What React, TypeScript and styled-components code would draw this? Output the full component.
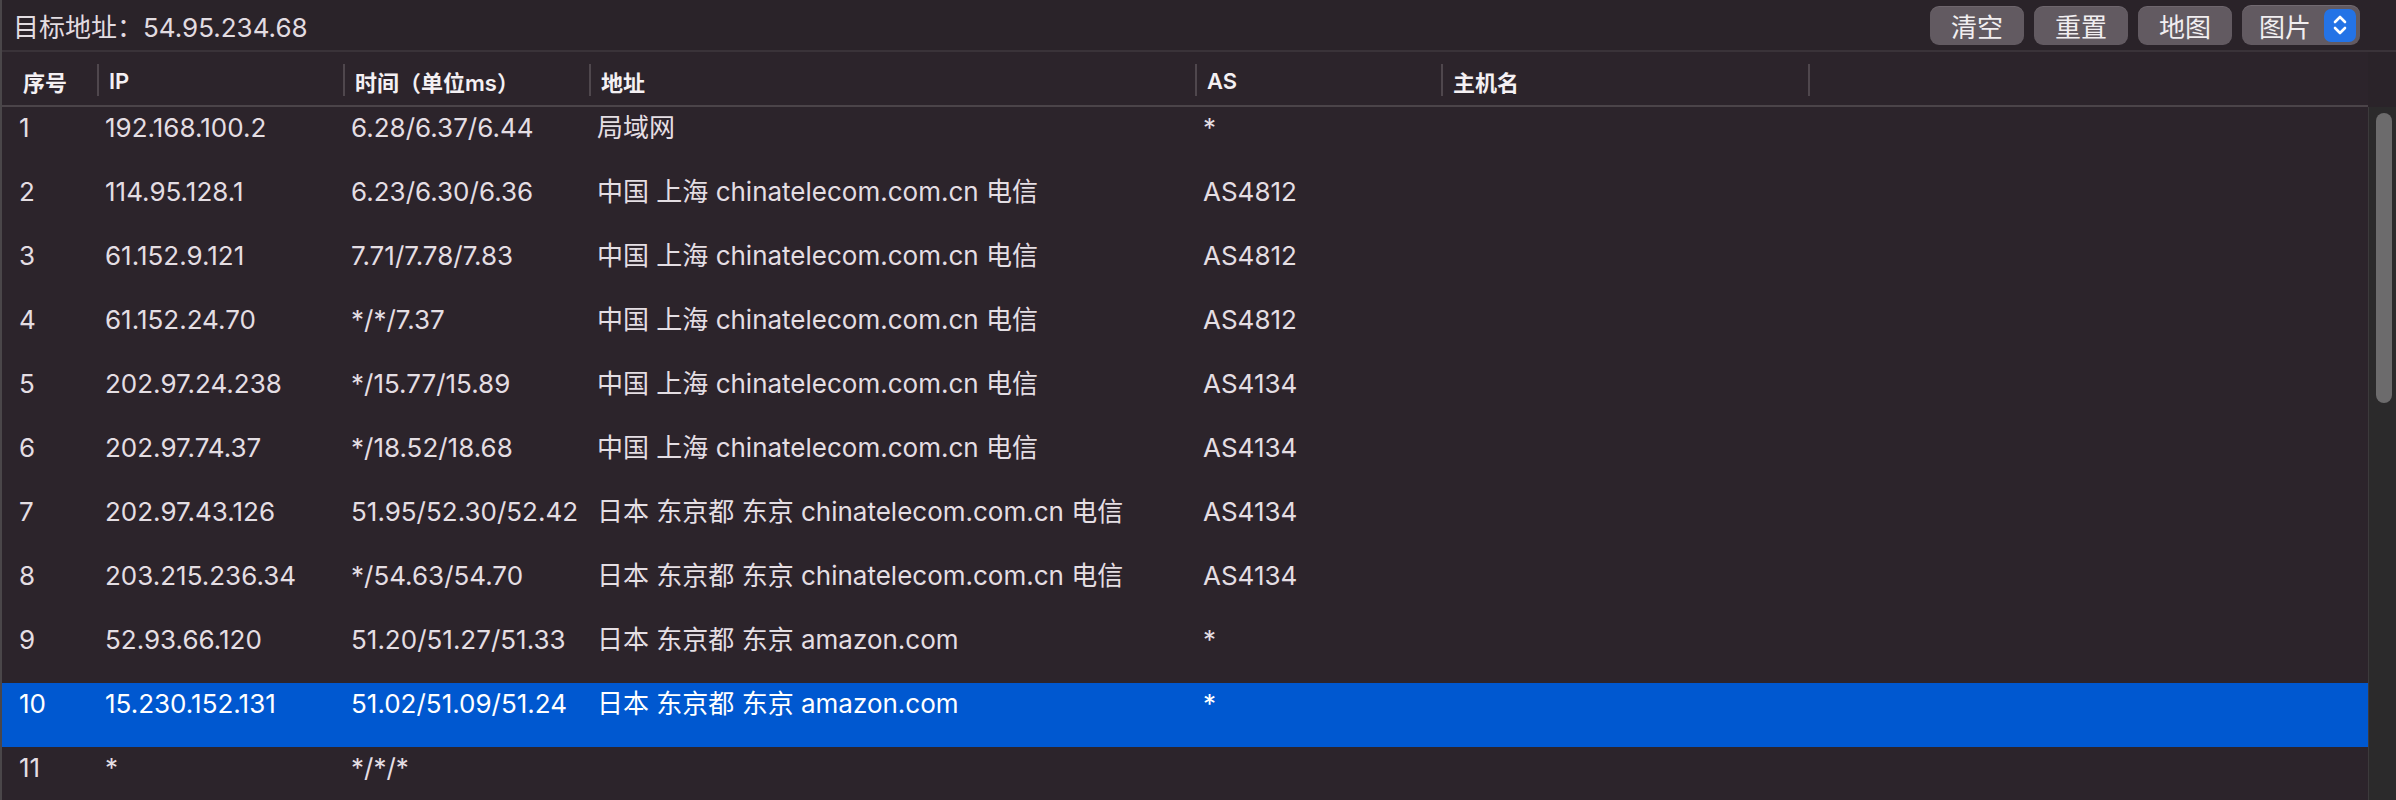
import React from 'react';
import styled, { createGlobalStyle } from 'styled-components';

const GlobalStyle = createGlobalStyle`
  html, body {
    margin: 0;
    padding: 0;
    background: #2c242b;
    overflow: hidden;
  }
`;

const FONT = `Inter, "Noto Sans CJK SC", sans-serif`;

// column left edges in the reference: 2, 97, 343, 589, 1195, 1441, 1808
const COLUMNS = '95px 246px 246px 606px 246px 367px 1fr';

type Hop = {
  no: string;
  ip: string;
  time: string;
  addr: string;
  as: string;
  host?: string;
};

const hops: Hop[] = [
  { no: '1', ip: '192.168.100.2', time: '6.28/6.37/6.44', addr: '局域网', as: '*' },
  { no: '2', ip: '114.95.128.1', time: '6.23/6.30/6.36', addr: '中国 上海 chinatelecom.com.cn 电信', as: 'AS4812' },
  { no: '3', ip: '61.152.9.121', time: '7.71/7.78/7.83', addr: '中国 上海 chinatelecom.com.cn 电信', as: 'AS4812' },
  { no: '4', ip: '61.152.24.70', time: '*/*/7.37', addr: '中国 上海 chinatelecom.com.cn 电信', as: 'AS4812' },
  { no: '5', ip: '202.97.24.238', time: '*/15.77/15.89', addr: '中国 上海 chinatelecom.com.cn 电信', as: 'AS4134' },
  { no: '6', ip: '202.97.74.37', time: '*/18.52/18.68', addr: '中国 上海 chinatelecom.com.cn 电信', as: 'AS4134' },
  { no: '7', ip: '202.97.43.126', time: '51.95/52.30/52.42', addr: '日本 东京都 东京 chinatelecom.com.cn 电信', as: 'AS4134' },
  { no: '8', ip: '203.215.236.34', time: '*/54.63/54.70', addr: '日本 东京都 东京 chinatelecom.com.cn 电信', as: 'AS4134' },
  { no: '9', ip: '52.93.66.120', time: '51.20/51.27/51.33', addr: '日本 东京都 东京 amazon.com', as: '*' },
  { no: '10', ip: '15.230.152.131', time: '51.02/51.09/51.24', addr: '日本 东京都 东京 amazon.com', as: '*' },
  { no: '11', ip: '*', time: '*/*/*', addr: '', as: '' },
];

const headers = ['序号', 'IP', '时间（单位ms）', '地址', 'AS', '主机名', ''];

const Window = styled.div`
  height: 100vh;
  display: flex;
  flex-direction: column;
  border-left: 2px solid #4a4649;
  background: #2c242b;
  font-family: ${FONT};
  color: #e4dee3;
  overflow: hidden;
`;

const TopBar = styled.div`
  height: 50px;
  flex-shrink: 0;
  display: flex;
  align-items: center;
  justify-content: space-between;
  padding: 0 36px 0 11px;
  background: #2a2329;
  border-bottom: 2px solid #3a3339;
`;

const Title = styled.div`
  font-size: 26px;
  color: #e2dce1;
  white-space: nowrap;
`;

const Actions = styled.div`
  display: flex;
  align-items: center;
  gap: 10px;
`;

const Button = styled.div`
  width: 94px;
  height: 39px;
  display: flex;
  align-items: center;
  justify-content: center;
  border-radius: 9px;
  background: #625a61;
  color: #f1eef0;
  font-size: 26px;
  box-shadow: inset 0 1px 0 rgba(255, 255, 255, 0.08);
`;

const Select = styled.div`
  width: 118px;
  height: 40px;
  box-sizing: border-box;
  display: flex;
  align-items: center;
  justify-content: space-between;
  padding: 0 4px 0 17px;
  border-radius: 9px;
  background: #625a61;
  color: #f1eef0;
  font-size: 26px;
  box-shadow: inset 0 1px 0 rgba(255, 255, 255, 0.1);
`;

const Stepper = styled.div`
  width: 32px;
  height: 33px;
  border-radius: 7px;
  background: #2473e6;
  display: flex;
  align-items: center;
  justify-content: center;
`;

const Body = styled.div`
  flex: 1;
  display: flex;
  min-height: 0;
`;

const Table = styled.div`
  flex: 1;
  display: flex;
  flex-direction: column;
  min-width: 0;
`;

const HeaderRow = styled.div`
  height: 53px;
  flex-shrink: 0;
  display: grid;
  grid-template-columns: ${COLUMNS};
  align-items: center;
  border-bottom: 2px solid #4b4449;
`;

const HeaderCell = styled.div<{ $first?: boolean; $divider?: boolean }>`
  position: relative;
  height: 100%;
  display: flex;
  align-items: center;
  padding: 4px 0 0 ${(p) => (p.$first ? '21px' : '12px')};
  box-sizing: border-box;
  font-size: 22px;
  font-weight: 600;
  color: #f4f0f3;
  white-space: nowrap;

  &::before {
    content: '';
    display: ${(p) => (p.$divider ? 'block' : 'none')};
    position: absolute;
    left: 0;
    top: 12px;
    width: 2px;
    height: 32px;
    background: #4f474d;
  }
`;

const Row = styled.div<{ $selected?: boolean }>`
  height: 64px;
  flex-shrink: 0;
  display: grid;
  grid-template-columns: ${COLUMNS};
  align-items: start;
  background: ${(p) => (p.$selected ? '#0058d0' : 'transparent')};
  color: ${(p) => (p.$selected ? '#ffffff' : '#e4dee3')};
`;

const Cell = styled.div<{ $first?: boolean }>`
  padding-left: ${(p) => (p.$first ? '17px' : '8px')};
  line-height: 42px;
  font-size: 26px;
  white-space: nowrap;
  overflow: hidden;
`;

const ScrollColumn = styled.div`
  width: 28px;
  flex-shrink: 0;
  display: flex;
  flex-direction: column;
`;

const ScrollCorner = styled.div`
  height: 55px;
  background: #2a2329;
`;

const ScrollTrack = styled.div`
  flex: 1;
  background: #2b2a2b;
  border-left: 1px solid #3c3a3c;
  padding: 6px 4px 0 7px;
`;

const ScrollThumb = styled.div`
  width: 16px;
  height: 290px;
  border-radius: 8px;
  background: #6c6b6c;
`;

const StepperIcon = () => (
  <svg width="18" height="26" viewBox="0 0 18 26" fill="none">
    <path d="M4 10 L9 5 L14 10" stroke="#fff" strokeWidth="2.6" strokeLinecap="round" strokeLinejoin="round" />
    <path d="M4 16 L9 21 L14 16" stroke="#fff" strokeWidth="2.6" strokeLinecap="round" strokeLinejoin="round" />
  </svg>
);

export default function App() {
  return (
    <>
      <GlobalStyle />
      <Window>
        <TopBar>
          <Title>目标地址：54.95.234.68</Title>
          <Actions>
            <Button>清空</Button>
            <Button>重置</Button>
            <Button>地图</Button>
            <Select>
              图片
              <Stepper>
                <StepperIcon />
              </Stepper>
            </Select>
          </Actions>
        </TopBar>
        <Body>
          <Table>
            <HeaderRow>
              {headers.map((h, i) => (
                <HeaderCell key={i} $first={i === 0} $divider={i > 0}>
                  {h}
                </HeaderCell>
              ))}
            </HeaderRow>
            {hops.map((hop) => (
              <Row key={hop.no} $selected={hop.no === '10'}>
                <Cell $first>{hop.no}</Cell>
                <Cell>{hop.ip}</Cell>
                <Cell>{hop.time}</Cell>
                <Cell>{hop.addr}</Cell>
                <Cell>{hop.as}</Cell>
                <Cell>{hop.host}</Cell>
                <Cell />
              </Row>
            ))}
          </Table>
          <ScrollColumn>
            <ScrollCorner />
            <ScrollTrack>
              <ScrollThumb />
            </ScrollTrack>
          </ScrollColumn>
        </Body>
      </Window>
    </>
  );
}
